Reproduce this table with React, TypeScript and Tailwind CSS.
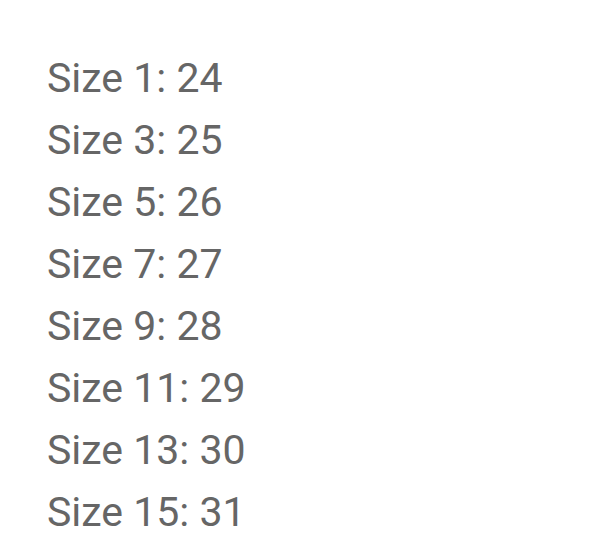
export default function App() {
  const rows = [
    [1, 24], [3, 25], [5, 26], [7, 27], [9, 28], [11, 29], [13, 30], [15, 31],
  ];
  return (
    <div className="w-[600px] h-[552px] bg-white pl-[47px] pt-[47px] overflow-hidden" style={{ fontFamily: "Roboto, sans-serif" }}>
      {rows.map(([a, b]) => (
        <div key={a} className="text-[41px] leading-[62px] text-[#666666]">
          Size {a}: {b}
        </div>
      ))}
    </div>
  );
}
